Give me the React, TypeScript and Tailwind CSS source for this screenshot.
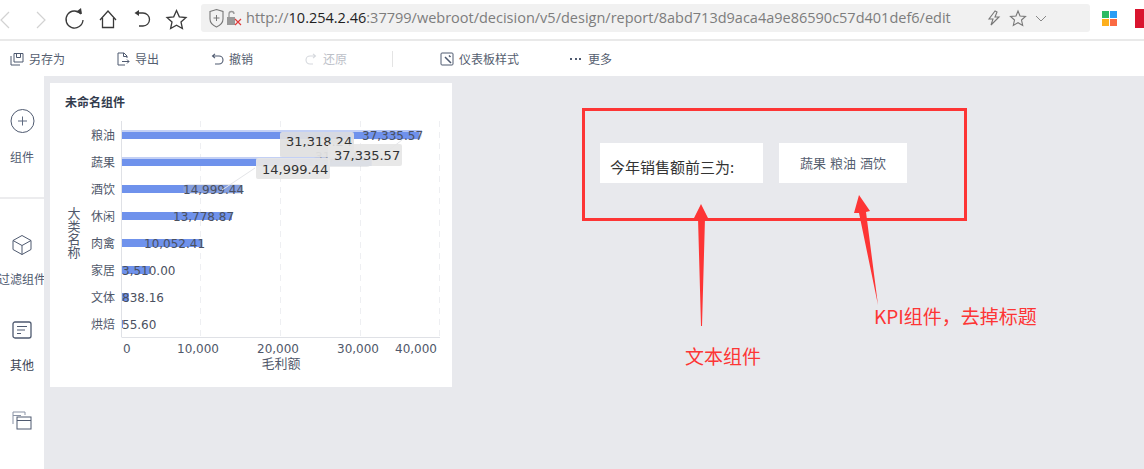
import React from "react";

const CJK = '"Noto Sans CJK SC", "Noto Sans", sans-serif';

const cats = [
  ["粮油", 37335.57, "37,335.57"],
  ["蔬果", 31318.24, "31,318.24"],
  ["酒饮", 14999.44, "14,999.44"],
  ["休闲", 13778.87, "13,778.87"],
  ["肉禽", 10052.41, "10,052.41"],
  ["家居", 3510.0, "3,510.00"],
  ["文体", 838.16, "838.16"],
  ["烘焙", 55.6, "55.60"],
] as const;

function Chart() {
  const x0 = 71.5;
  const scale = 79.7 / 10000;
  const labelEnds = [371, 0, 193, 181, 150, 120, 106, 99];
  const labelX = [312, 0, 133, 123, 94, 72, 72, 72];
  return (
    <svg width="402" height="304" viewBox="0 0 402 304" className="block">
      {[150.5, 230.5, 310.5, 389.5].map((x) => (
        <line key={x} x1={x} x2={x} y1="38" y2="254" stroke="#eeeff2" strokeDasharray="6 5" />
      ))}
      <line x1={x0} x2={x0} y1="38" y2="254" stroke="#dfe1e6" />
      <line x1={x0} x2="390" y1="254.5" y2="254.5" stroke="#dfe1e6" />
      {cats.map(([name, v], i) => {
        const y = 52 + i * 27;
        return (
          <g key={name}>
            <text x="65" y={y + 4.5} textAnchor="end" fontSize="12" fill="#50586a" fontFamily={CJK}>{name}</text>
            <rect x={x0 + 0.5} y={y - 4} width={Math.max(v * scale, 1)} height="8" fill="#6f92ec" />
          </g>
        );
      })}
      <rect x="72" y="47" width="300" height="2" fill="#c3d0f5" />
      <rect x="72" y="74" width="248" height="2" fill="#c3d0f5" />
      <rect x="320" y="47" width="52" height="10" rx="5" fill="#6f92ec" fillOpacity="0.18" />
      <rect x="262" y="74" width="60" height="10" rx="5" fill="#b5b8c0" fillOpacity="0.3" />
      <rect x="133" y="101" width="60" height="10" rx="5" fill="#b5b8c0" fillOpacity="0.3" />
      {cats.map(([name, , label], i) =>
        i === 1 ? null : (
          <text key={name} x={labelX[i]} y={56.5 + i * 27} fontSize="12" fill="#4a5060" fontFamily='"DejaVu Sans", sans-serif'>{label}</text>
        )
      )}
      <text x="265" y="78" fontSize="12" fill="#8f939c" fontFamily='"DejaVu Sans", sans-serif'>31,318.24</text>
      <path d="M172 107 L205 85" stroke="#e4e5e8" fill="none" />
      <path d="M352 57 L335 70" stroke="#e4e5e8" fill="none" />
      <rect x="230" y="49" width="74" height="25" rx="2" fill="#e0e0e0" fillOpacity="0.92" />
      <text x="236" y="63" fontSize="13" fill="#333" fontFamily='"DejaVu Sans", sans-serif'>31,318.24</text>
      <rect x="278" y="61" width="74" height="22" rx="2" fill="#e6e6e6" fillOpacity="0.9" />
      <text x="284" y="77" fontSize="13" fill="#333" fontFamily='"DejaVu Sans", sans-serif'>37,335.57</text>
      <rect x="206" y="75" width="74" height="21" rx="2" fill="#e6e6e6" fillOpacity="0.95" />
      <text x="212" y="91" fontSize="13" fill="#333" fontFamily='"DejaVu Sans", sans-serif'>14,999.44</text>
      {[
        [73, "0"],
        [127, "10,000"],
        [207, "20,000"],
        [287, "30,000"],
        [345, "40,000"],
      ].map(([x, t]) => (
        <text key={t} x={x as number} y="270" fontSize="12" fill="#50586a" fontFamily='"DejaVu Sans", sans-serif'>{t}</text>
      ))}
      <text x="231" y="285" textAnchor="middle" fontSize="13" fill="#50586a" fontFamily={CJK}>毛利额</text>
      {["大", "类", "名", "称"].map((c, i) => (
        <text key={c} x="24" y={135 + i * 13} textAnchor="middle" fontSize="13" fill="#50586a" fontFamily={CJK}>{c}</text>
      ))}
      <text x="15" y="24" fontSize="12" fontWeight="700" fill="#333c4e" fontFamily={CJK}>未命名组件</text>
    </svg>
  );
}

const stroke = { fill: "none", stroke: "#3a3a3a", strokeWidth: 1.3 } as const;

function BrowserBar() {
  return (
    <div className="flex h-[41px] items-center border-b-2 border-[#e9e9e9] bg-white relative">
      <div className="flex w-[201px] shrink-0 items-center">
        <svg width="201" height="40" viewBox="0 0 201 40">
          <path d="M9 12 L1 20 L9 28" fill="none" stroke="#d2d2d2" strokeWidth="1.2" />
          <path d="M37 12 L45 20 L37 28" fill="none" stroke="#d2d2d2" strokeWidth="1.2" />
          <path d="M81 14 A8.5 8.5 0 1 0 83 20" {...stroke} />
          <path d="M76 12 L82 14 L81 8" fill="#3a3a3a" stroke="none" />
          <path d="M100 20 L108 11 L116 20 M102.5 18 V27.5 H113.500 V18" {...stroke} />
          <path d="M136 13 H143 A6.500 6.500 0 0 1 143 26 H139" {...stroke} />
          <path d="M139 10 L134.500 13 L139 16" fill="#3a3a3a" stroke="none" />
          <path d="M176.500 10.500 L179.300 16.800 L186 17.500 L181 22 L182.400 28.500 L176.500 25.200 L170.600 28.500 L172 22 L167 17.500 L173.700 16.800 Z" {...stroke} />
        </svg>
      </div>
      <div className="flex h-[28px] w-[889px] shrink-0 items-center rounded-[3px] bg-[#f1f1f1]" style={{ marginTop: -3 }}>
        <svg width="45" height="28" viewBox="0 0 45 28" className="shrink-0">
          <path d="M9 7.500 L15.500 5.500 L22 7.500 V15 C22 19 19 21.500 15.500 23 C12 21.500 9 19 9 15 Z" fill="none" stroke="#777" strokeWidth="1.1" />
          <path d="M15.500 11 V17 M12.500 14 H18.500" stroke="#777" />
          <rect x="26" y="13" width="8" height="8" fill="#999" />
          <path d="M28 13 V10 A2.500 2.500 0 0 1 33 10" fill="none" stroke="#999" strokeWidth="1.300" />
          <path d="M34 15 L40 21 M40 15 L34 21" stroke="#e03b3b" strokeWidth="1.200" />
        </svg>
        <div className="text-[14.5px] whitespace-nowrap text-[#7d7d7d] [font-family:'Open_Sans',sans-serif]">
          http://<span className="text-[#1f1f1f]">10.254.2.46</span>:37799/webroot/decision/v5/design/report/8abd713d9aca4a9e86590c57d401def6/edit
        </div>
        <div className="flex-1" />
        <svg width="90" height="28" viewBox="0 0 90 28" className="shrink-0 mr-[18px]">
          <path d="M13 7 L7 15 H11 L9 21 L17 13 H13 L15 8 Z" fill="none" stroke="#777" strokeWidth="1.100" />
          <path d="M36 7 L38 12 L43.500 12.500 L39.500 16 L40.700 21.500 L36 18.700 L31.300 21.500 L32.500 16 L28.500 12.500 L34 12 Z" fill="none" stroke="#777" strokeWidth="1.100" />
          <path d="M54 12 L59 17 L64 12" fill="none" stroke="#888" />
        </svg>
      </div>
      <div className="ml-[12px] grid h-[15px] w-[15px] grid-cols-2 gap-px" style={{ marginTop: -3 }}>
        <div className="bg-[#2cbb63]" />
        <div className="bg-[#2a9df4]" />
        <div className="bg-[#fdb01d]" />
        <div className="bg-[#fb6a43]" />
      </div>
      <div className="ml-[18px] h-[19px] flex-1 bg-[#d9142e]" style={{ marginTop: -3 }} />
    </div>
  );
}

const tools = [
  ["另存为", 29, "#555e70"],
  ["导出", 135, "#555e70"],
  ["撤销", 229, "#555e70"],
  ["还原", 323, "#bcc0c8"],
] as const;

function ToolIcon({ kind }: { kind: string }) {
  const c = kind === "还原" ? "#d5d8dd" : "#4f5a70";
  return (
    <svg width="14" height="14" viewBox="0 0 14 14" className="shrink-0 mr-[5px]">
      {kind === "另存为" && <path d="M4 1.500 H13 V10 H4 Z M1 4 V13 H10 M6.500 1.500 V5.500 H10.500 V1.500" fill="none" stroke={c} />}
      {kind === "导出" && <path d="M11 6 V4 L8 1 H2 V13 H9 M7.500 1 V4.500 H11 M6 9.500 H13 M11 7.500 L13 9.500 L11 11.500" fill="none" stroke={c} />}
      {kind === "撤销" && <path d="M3 4 H9 A4 4 0 0 1 9 12 H5 M5 1.800 L2.500 4 L5 6.200" fill="none" stroke={c} strokeWidth="1.100" />}
      {kind === "还原" && <path d="M11 4 H6 A4 4 0 0 0 6 12 H9 M9 1.800 L11.500 4 L9 6.200" fill="none" stroke={c} strokeWidth="1.100" />}
      {kind === "样式" && (
        <g fill="none" stroke={c}>
          <rect x="1" y="1" width="12" height="12" rx="1" />
          <path d="M5 5 L11 11 M9 3.500 L10.500 5" strokeWidth="1.500" />
        </g>
      )}
    </svg>
  );
}

function Toolbar() {
  return (
    <div className="flex h-[35px] items-center bg-white pl-[10px] text-[12px] [font-family:'Noto_Sans_CJK_SC',sans-serif]">
      <div className="flex w-[106px] items-center text-[#555e70]"><ToolIcon kind="另存为" />另存为</div>
      <div className="flex w-[94px] items-center text-[#555e70]"><ToolIcon kind="导出" />导出</div>
      <div className="flex w-[94px] items-center text-[#555e70]"><ToolIcon kind="撤销" />撤销</div>
      <div className="flex w-[88px] items-center text-[#bcc0c8]"><ToolIcon kind="还原" />还原</div>
      <div className="h-[16px] w-px bg-[#e4e4e4]" />
      <div className="ml-[47px] flex w-[130px] items-center text-[#555e70]"><ToolIcon kind="样式" />仪表板样式</div>
      <div className="flex items-center text-[#555e70]">
        <span className="mr-[7px] flex w-[11px] justify-between">
          <i className="h-[2px] w-[2px] bg-[#4f5a70]" />
          <i className="h-[2px] w-[2px] bg-[#4f5a70]" />
          <i className="h-[2px] w-[2px] bg-[#4f5a70]" />
        </span>
        更多
      </div>
    </div>
  );
}

function Sidebar() {
  return (
    <aside className="flex h-full w-[44px] shrink-0 flex-col items-center overflow-hidden bg-white text-[12px] text-[#4f5a70] [font-family:'Noto_Sans_CJK_SC',sans-serif]">
      <div className="flex h-[123px] w-full shrink-0 flex-col items-center border-b-2 border-[#ececee] pt-[32px]">
        <svg width="26" height="26" viewBox="0 0 26 26">
          <circle cx="13.500" cy="13" r="11.500" fill="none" stroke="#4f5a70" />
          <path d="M13.500 8.500 V17.500 M9 13 H18" stroke="#5e6a80" />
        </svg>
        <div className="mt-[14px] leading-[18px]">组件</div>
      </div>
      <div className="mt-[35px] flex w-full flex-col items-center">
        <svg width="22" height="22" viewBox="0 0 22 22">
          <path d="M11 1.500 L20 6.500 V15.500 L11 20.500 L2 15.500 V6.500 Z M2 6.500 L11 11.500 L20 6.500 M11 11.500 V20.500" fill="none" stroke="#4f5a70" />
        </svg>
        <div className="mt-[14px] whitespace-nowrap leading-[18px]" style={{ marginLeft: 0 }}>过滤组件</div>
      </div>
      <div className="mt-[32px] flex flex-col items-center">
        <svg width="22" height="22" viewBox="0 0 22 22">
          <rect x="2" y="2" width="18" height="16" rx="2" fill="none" stroke="#4f5a70" strokeWidth="1.300" />
          <path d="M6 6.500 H16 M6 10 H14 M6 13.500 H10" stroke="#4f5a70" />
        </svg>
        <div className="mt-[14px] leading-[18px] text-[#3c4454]">其他</div>
      </div>
      <div className="mt-[35px]">
        <svg width="22" height="22" viewBox="0 0 22 22">
          <path d="M2 15 V3 H14 V6 M2 6.500 H10" fill="none" stroke="#8a93a5" />
          <rect x="6" y="8" width="14" height="12" fill="none" stroke="#4f5a70" />
          <path d="M6 11.500 H20" stroke="#4f5a70" />
        </svg>
      </div>
    </aside>
  );
}

export default function App() {
  return (
    <div className="relative h-[469px] w-[1144px] overflow-hidden bg-white">
      <BrowserBar />
      <Toolbar />
      <div className="flex h-[393px] bg-[#e8e9ed]">
        <Sidebar />
        <div className="relative flex-1">
          <div className="absolute left-[6px] top-[7px] h-[304px] w-[402px] bg-white">
            <Chart />
          </div>
          <div className="absolute left-[556px] top-[67px] flex h-[40px] w-[163px] items-center bg-white pl-[10px] text-[15px] text-[#333] [font-family:'Noto_Sans_CJK_SC',sans-serif]">
            <span className="mt-[8px]">今年销售额前三为:</span>
          </div>
          <div className="absolute left-[735px] top-[67px] flex h-[40px] w-[128px] items-center justify-center gap-[4px] bg-white text-[13px] text-[#555e70] [font-family:'Noto_Sans_CJK_SC',sans-serif]">
            <span>蔬果</span><span>粮油</span><span>酒饮</span>
          </div>
          <div className="absolute left-[538px] top-[32px] h-[113px] w-[385px] border-[3px] border-[#fd3535]" />
          <svg className="absolute left-0 top-0" width="1100" height="393" viewBox="0 0 1100 393">
            <g transform="translate(-44 -76)" fill="#fd3535">
              <path d="M701 204 L708 218 H705 L702 326 H701 L698 218 H694 Z" />
              <path d="M859 195 L870 211 L866 212 L878 305 L859 213 L854 213 Z" />
            </g>
          </svg>
          <div className="absolute left-[641px] top-[266px] whitespace-nowrap text-[19px] leading-[28px] text-[#fd3535] [font-family:'Noto_Sans_CJK_SC',sans-serif]">文本组件</div>
          <div className="absolute left-[830px] top-[226px] whitespace-nowrap text-[19px] leading-[28px] text-[#fd3535] [font-family:'Noto_Sans_CJK_SC',sans-serif]">KPI组件，去掉标题</div>
        </div>
      </div>
    </div>
  );
}
